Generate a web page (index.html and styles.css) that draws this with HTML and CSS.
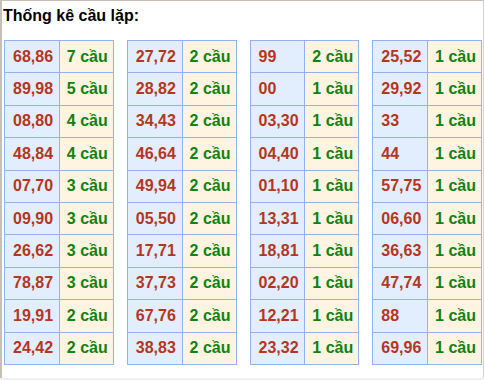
FILE: index.html
```html
<!DOCTYPE html>
<html>
<head>
<meta charset="utf-8">
<link rel="stylesheet" href="styles.css">
</head>
<body>
<div class="frame">
  <div class="title">Thống kê cầu lặp:</div>
  <div class="grid">
    <table class="stat">
      <tr><td class="num">68,86</td><td class="cnt">7 cầu</td></tr>
      <tr><td class="num">89,98</td><td class="cnt">5 cầu</td></tr>
      <tr><td class="num">08,80</td><td class="cnt">4 cầu</td></tr>
      <tr><td class="num">48,84</td><td class="cnt">4 cầu</td></tr>
      <tr><td class="num">07,70</td><td class="cnt">3 cầu</td></tr>
      <tr><td class="num">09,90</td><td class="cnt">3 cầu</td></tr>
      <tr><td class="num">26,62</td><td class="cnt">3 cầu</td></tr>
      <tr><td class="num">78,87</td><td class="cnt">3 cầu</td></tr>
      <tr><td class="num">19,91</td><td class="cnt">2 cầu</td></tr>
      <tr><td class="num">24,42</td><td class="cnt">2 cầu</td></tr>
    </table>
    <table class="stat">
      <tr><td class="num">27,72</td><td class="cnt">2 cầu</td></tr>
      <tr><td class="num">28,82</td><td class="cnt">2 cầu</td></tr>
      <tr><td class="num">34,43</td><td class="cnt">2 cầu</td></tr>
      <tr><td class="num">46,64</td><td class="cnt">2 cầu</td></tr>
      <tr><td class="num">49,94</td><td class="cnt">2 cầu</td></tr>
      <tr><td class="num">05,50</td><td class="cnt">2 cầu</td></tr>
      <tr><td class="num">17,71</td><td class="cnt">2 cầu</td></tr>
      <tr><td class="num">37,73</td><td class="cnt">2 cầu</td></tr>
      <tr><td class="num">67,76</td><td class="cnt">2 cầu</td></tr>
      <tr><td class="num">38,83</td><td class="cnt">2 cầu</td></tr>
    </table>
    <table class="stat">
      <tr><td class="num">99</td><td class="cnt">2 cầu</td></tr>
      <tr><td class="num">00</td><td class="cnt">1 cầu</td></tr>
      <tr><td class="num">03,30</td><td class="cnt">1 cầu</td></tr>
      <tr><td class="num">04,40</td><td class="cnt">1 cầu</td></tr>
      <tr><td class="num">01,10</td><td class="cnt">1 cầu</td></tr>
      <tr><td class="num">13,31</td><td class="cnt">1 cầu</td></tr>
      <tr><td class="num">18,81</td><td class="cnt">1 cầu</td></tr>
      <tr><td class="num">02,20</td><td class="cnt">1 cầu</td></tr>
      <tr><td class="num">12,21</td><td class="cnt">1 cầu</td></tr>
      <tr><td class="num">23,32</td><td class="cnt">1 cầu</td></tr>
    </table>
    <table class="stat">
      <tr><td class="num">25,52</td><td class="cnt">1 cầu</td></tr>
      <tr><td class="num">29,92</td><td class="cnt">1 cầu</td></tr>
      <tr><td class="num">33</td><td class="cnt">1 cầu</td></tr>
      <tr><td class="num">44</td><td class="cnt">1 cầu</td></tr>
      <tr><td class="num">57,75</td><td class="cnt">1 cầu</td></tr>
      <tr><td class="num">06,60</td><td class="cnt">1 cầu</td></tr>
      <tr><td class="num">36,63</td><td class="cnt">1 cầu</td></tr>
      <tr><td class="num">47,74</td><td class="cnt">1 cầu</td></tr>
      <tr><td class="num">88</td><td class="cnt">1 cầu</td></tr>
      <tr><td class="num">69,96</td><td class="cnt">1 cầu</td></tr>
    </table>
  </div>
</div>
</body>
</html>
```

FILE: styles.css
```css
html, body {
  margin: 0;
  padding: 0;
}
body {
  background: #f0f0f0;
  font-family: "Liberation Sans", Arial, sans-serif;
  width: 484px;
  height: 380px;
  overflow: hidden;
}
.frame {
  box-sizing: border-box;
  width: 484px;
  height: 378px;
  background: #ffffff;
  border-left: 2px solid #c9c0b4;
  border-top: 1px solid #c9c0b4;
  border-right: 1px solid #d6d0c8;
  padding: 0 1px 0 2px;
}
.title {
  font-size: 16px;
  font-weight: bold;
  line-height: 18px;
  color: #000;
  padding-top: 6px;
  margin-left: -1px;
  height: 33px;
}
.grid {
  display: grid;
  grid-template-columns: repeat(4, 1fr);
  column-gap: 13px;
}
.stat {
  border-collapse: collapse;
  table-layout: fixed;
  width: 100%;
  height: 325px;
}
.stat td {
  border: 1px solid #93b3ef;
  font-size: 16px;
  font-weight: bold;
  padding: 0 0 0 8px;
  white-space: nowrap;
  width: 50%;
}
.num {
  background: #e2eefd;
  color: #b5361c;
}
.cnt {
  background: #fff4e2;
  color: #108210;
  padding-left: 7px !important;
}
```
